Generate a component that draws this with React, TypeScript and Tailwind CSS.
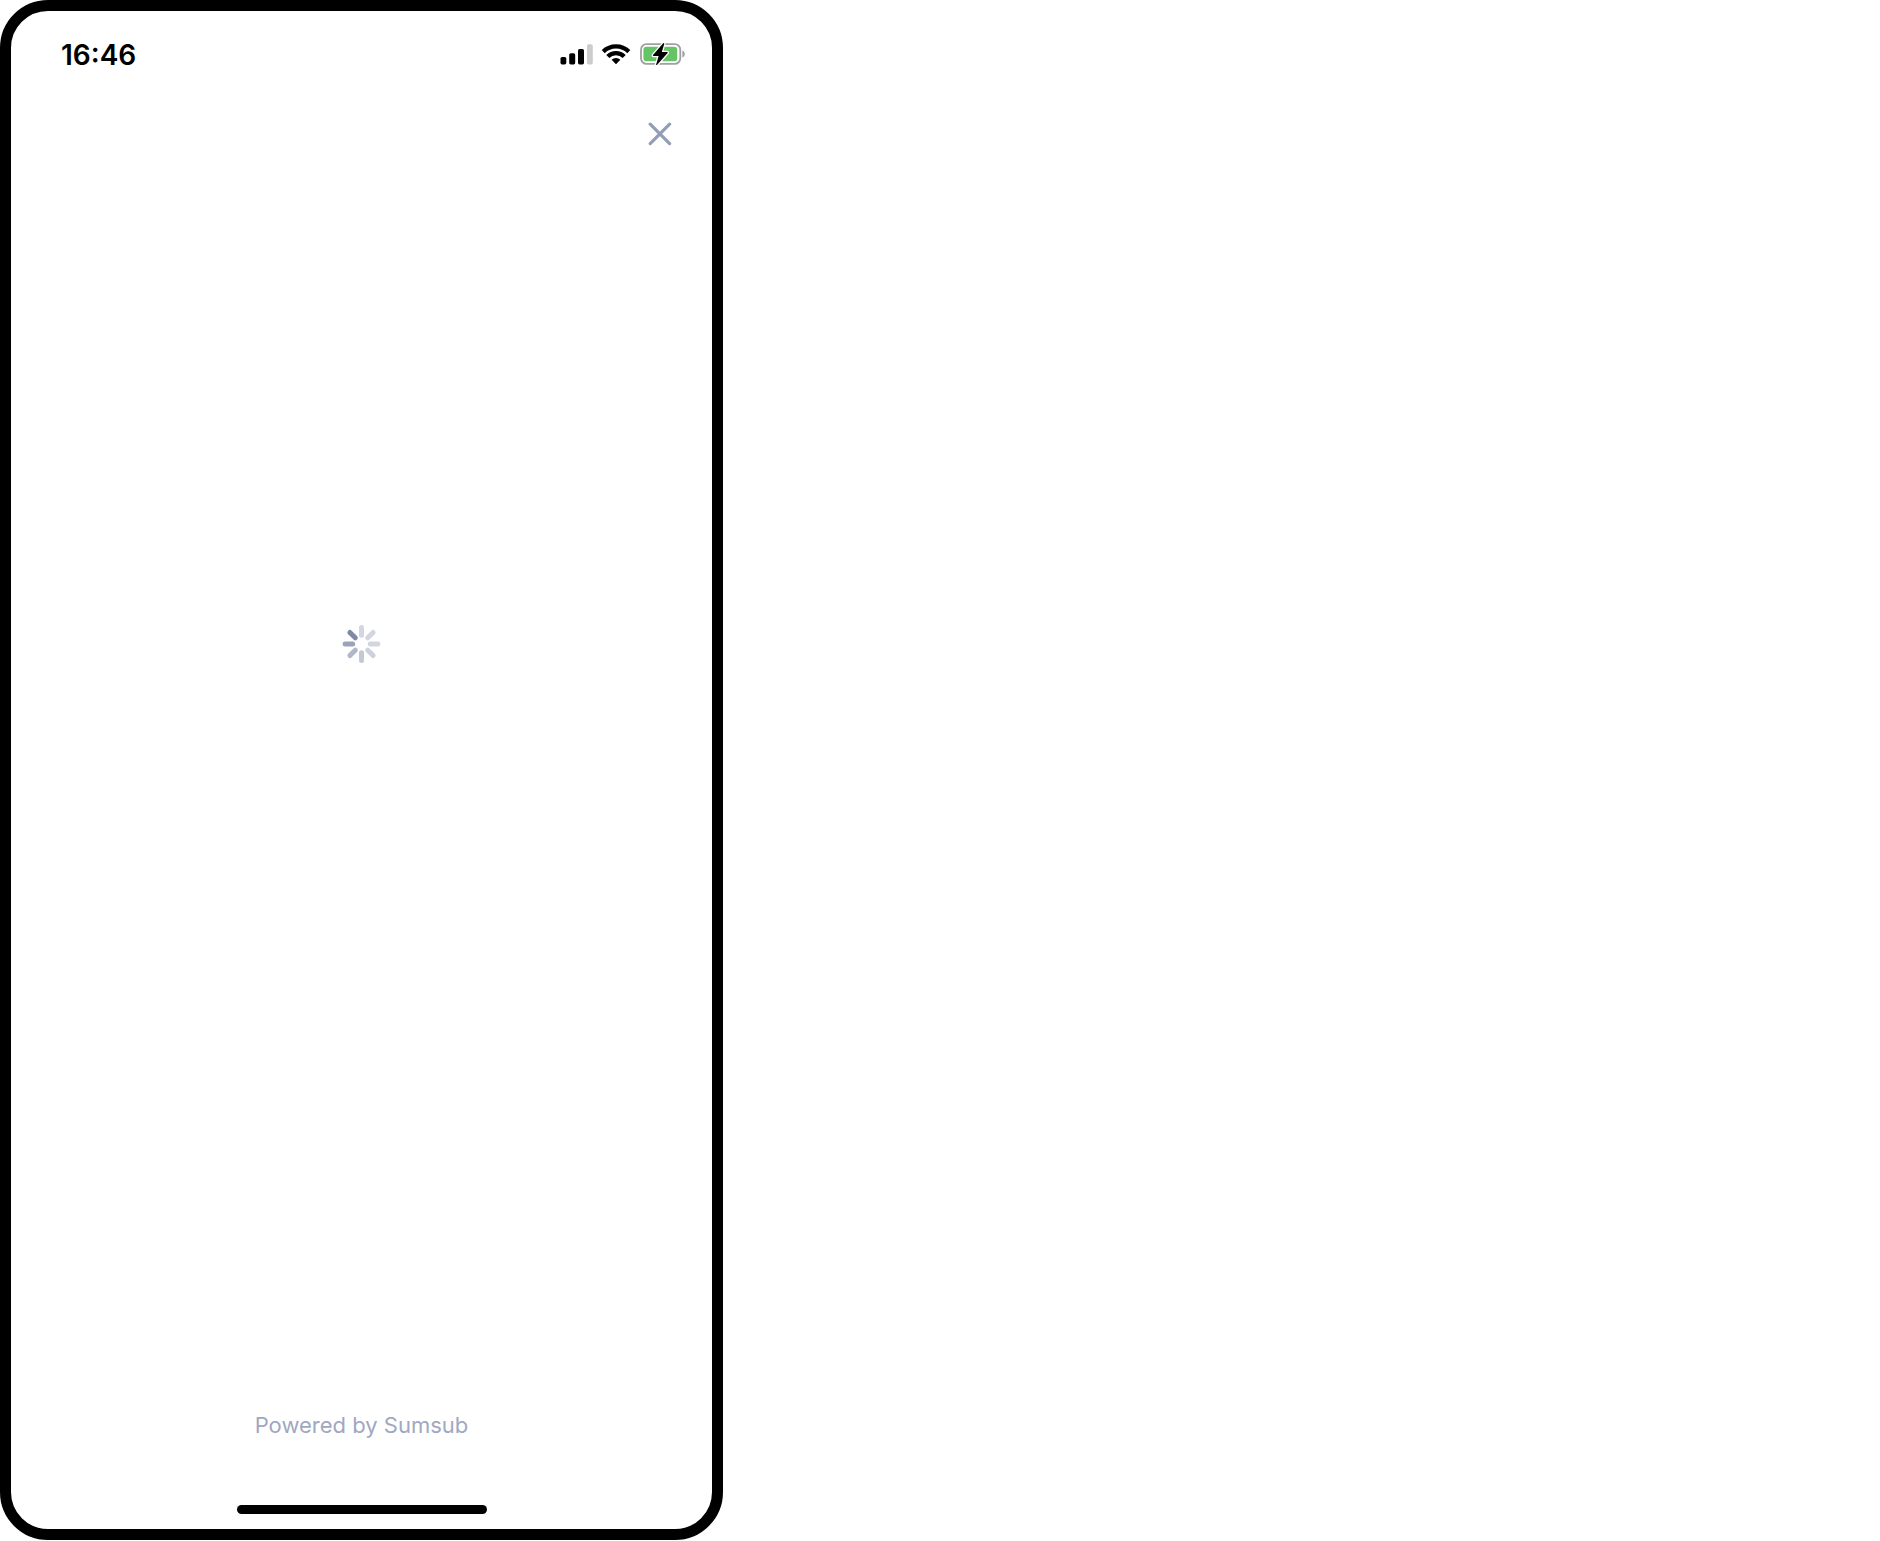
import React from "react";

function SignalIcon() {
  return (
    <svg width="34" height="22" viewBox="0 0 34 22" aria-hidden="true">
      <rect x="0.5" y="14" width="5.8" height="7.4" rx="1.6" />
      <rect x="9.2" y="10.3" width="6" height="11.1" rx="1.6" />
      <rect x="18" y="6" width="6" height="15.4" rx="1.6" />
      <rect x="27" y="1.3" width="5.8" height="20.1" rx="1.6" fill="#cccccc" />
    </svg>
  );
}

function WifiIcon() {
  return (
    <svg width="30" height="22" viewBox="0 0 30 22" fill="none" stroke="#000" strokeWidth="4.3" aria-hidden="true">
      <path d="M1.2 8.6A18.3 18.3 0 0 1 26.8 8.6" />
      <path d="M5.8 13.6A11.5 11.5 0 0 1 22.2 13.6" />
      <path d="M14 21.2L9.6 16.8A6.2 6.2 0 0 1 18.4 16.8Z" fill="#000" stroke="none" />
    </svg>
  );
}

function BatteryIcon() {
  return (
    <svg width="46" height="24" viewBox="0 0 46 24" aria-hidden="true">
      <rect x="1" y="2.1" width="39.3" height="19.8" rx="5.6" fill="#fff" stroke="#a0a0a0" strokeWidth="1.8" />
      <rect x="3.4" y="4.7" width="33.8" height="14.6" rx="3" fill="#65c466" />
      <path d="M42.4 8.6C45.6 9.8 45.6 14.4 42.4 15.6Z" fill="#a0a0a0" />
      <path
        d="M23.2 1.3L13 13Q12.6 13.9 13.4 14H18.6L16.1 22.4Q16.2 23.4 17.2 22.7L27.6 11Q28 10.1 27.1 10H21.8L24.3 1.7Q24.2 0.6 23.2 1.3Z"
        fill="#000"
        stroke="#fff"
        strokeWidth="2.6"
        paintOrder="stroke"
      />
    </svg>
  );
}

const rays = [
  { angle: 0, color: "#d3d6e0" },
  { angle: 45, color: "#d3d6e0" },
  { angle: 90, color: "#d3d6e0" },
  { angle: 135, color: "#cdd1dc" },
  { angle: 180, color: "#c3c8d6" },
  { angle: 225, color: "#b0b7c9" },
  { angle: 270, color: "#9ba3ba" },
  { angle: 315, color: "#7f89a5" },
];

function Spinner() {
  return (
    <svg width="40" height="40" viewBox="-19.5 -20 40 40" role="status" aria-label="Loading">
      {rays.map((ray) => (
        <line
          key={ray.angle}
          y1="-16.4"
          y2="-8.8"
          stroke={ray.color}
          strokeWidth="5"
          strokeLinecap="round"
          transform={`rotate(${ray.angle})`}
        />
      ))}
    </svg>
  );
}

export default function App() {
  return (
    <div className="flex min-h-screen bg-white pb-px font-[Inter,sans-serif]">
      <div className="flex w-full max-w-[723px] flex-col rounded-[48px] border-[11px] border-black bg-white">
        <div className="flex h-[86px] items-center justify-between pr-[26px] pl-[50px]">
          <time className="pt-0.5 text-[28px] leading-8 font-semibold text-black">16:46</time>
          <div className="flex items-center gap-2">
            <SignalIcon />
            <WifiIcon />
            <BatteryIcon />
          </div>
        </div>
        <header className="flex h-[74px] items-center justify-end pr-9">
          <button type="button" aria-label="Close" className="flex size-8 items-center justify-center">
            <svg width="24" height="24" viewBox="0 0 24 24" stroke="#949db8" strokeWidth="3.2" strokeLinecap="round">
              <path d="M2.2 2.2L21.6 21.6M21.6 2.2L2.2 21.6" />
            </svg>
          </button>
        </header>
        <main className="flex flex-1 items-center justify-center pb-[292px]">
          <Spinner />
        </main>
        <footer className="flex flex-col items-center gap-16 pb-[15px]">
          <p className="text-[22px] leading-8 text-[#9fa8c0]">Powered by Sumsub</p>
          <div className="h-[9px] w-[250px] rounded-full bg-black" />
        </footer>
      </div>
    </div>
  );
}
